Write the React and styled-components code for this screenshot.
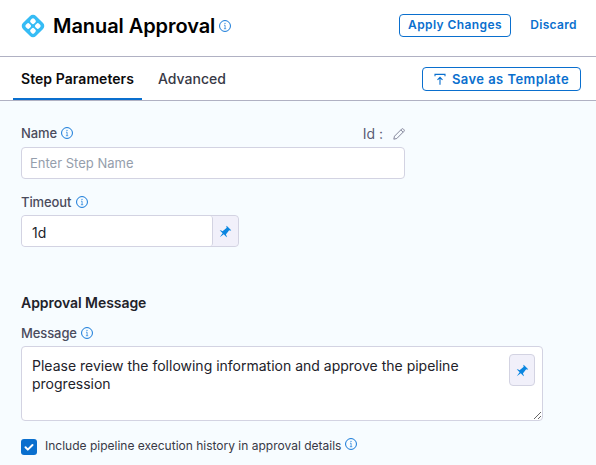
import React from 'react';
import styled, { createGlobalStyle } from 'styled-components';

const GlobalStyle = createGlobalStyle`
  *, *::before, *::after { box-sizing: border-box; }
  body { margin: 0; background: #f7fcff; font-family: Inter, sans-serif; color: #22222a; }
  button, input, textarea { font-family: inherit; }
`;

const Panel = styled.main`
  display: flex;
  flex-direction: column;
  width: 596px;
  height: 465px;
  overflow: hidden;
  background: #f7fcff;
`;

const Header = styled.header`
  display: flex;
  align-items: center;
  height: 57px;
  padding: 0 7px 4px 20px;
  background: #fff;
  border-bottom: 1px solid #b0b1c3;
`;

const Title = styled.h1`
  margin: 0 4px 0 7px;
  font-size: 20px;
  line-height: 28px;
  font-weight: 600;
  letter-spacing: -0.07px;
  color: #000;
  white-space: nowrap;
`;

const Actions = styled.div`
  display: flex;
  align-items: center;
  gap: 7px;
  margin: 0 0 2px auto;
`;

const Button = styled.button`
  display: flex;
  align-items: center;
  justify-content: center;
  width: ${(p) => p.$width}px;
  height: ${(p) => p.$height}px;
  padding: 0 0 1px;
  gap: 6px;
  border: 1px solid ${(p) => (p.$plain ? 'transparent' : '#0a6fce')};
  border-radius: 4px;
  background: transparent;
  color: #0a6fce;
  font-size: ${(p) => p.$size}px;
  font-weight: 600;
  letter-spacing: ${(p) => p.$tracking}px;
  white-space: nowrap;
`;

const TabBar = styled.nav`
  display: flex;
  height: 44px;
  padding: 0 15px 0 13px;
  background: #fff;
  border-bottom: 1px solid #b0b1c3;
`;

const Tab = styled.button`
  height: 43px;
  padding: 2px 8px 0;
  border: 0;
  border-bottom: 2px solid ${(p) => (p.$active ? '#0a6fce' : 'transparent')};
  background: none;
  font-size: 14px;
  font-weight: ${(p) => (p.$active ? 600 : 500)};
  letter-spacing: ${(p) => (p.$active ? 0.06 : 0)}px;
  color: ${(p) => (p.$active ? '#0b0b0d' : '#383946')};
  margin-right: 8px;
  white-space: nowrap;
`;

const TabActions = styled.div`
  margin: 10px 0 0 auto;
`;

const Form = styled.form`
  display: flex;
  flex-direction: column;
  padding: 23px 21px 0;
`;

const LabelRow = styled.div`
  display: flex;
  align-items: center;
  justify-content: space-between;
  width: 384px;
  height: 18px;
`;

const Label = styled.label`
  display: flex;
  align-items: center;
  gap: ${(p) => p.$gap || 4}px;
  font-size: 13px;
  line-height: 18px;
  font-weight: 500;
  letter-spacing: -0.1px;
  color: #4a4b5c;
`;

const Identifier = styled.div`
  display: flex;
  align-items: center;
  gap: 10px;
  padding-top: 1px;
  font-size: 14px;
  line-height: 18px;
  color: #5c5e77;
`;

const NameInput = styled.input`
  width: 384px;
  height: 32px;
  margin: 5px 0 14px;
  padding: 0 8px;
  border: 1px solid #d3d3e2;
  border-radius: 4px;
  background: #fff;
  font-size: 13px;
  outline: 0;
  &::placeholder { color: #959eac; opacity: 1; }
`;

const TimeoutGroup = styled.div`
  display: flex;
  width: 218px;
  height: 32px;
  margin: 4px 0 47px;
  border: 1px solid #d3d3e2;
  border-radius: 4px;
  background: #f1f0fa;
  overflow: hidden;
`;

const TimeoutInput = styled.input`
  width: 191px;
  padding: 2px 10px 0;
  border: 0;
  border-right: 1px solid #d3d3e2;
  border-radius: 3px;
  background: #fff;
  font-size: 14px;
  color: #22222a;
  outline: 0;
`;

const PinButton = styled.button`
  display: flex;
  align-items: center;
  justify-content: center;
  width: 26px;
  height: ${(p) => (p.$framed ? 32 : 30)}px;
  padding: 0;
  border: ${(p) => (p.$framed ? '1px solid #d3d3e2' : '0')};
  border-radius: 4px;
  background: #f1f0fa;
  color: #0a86e0;
`;

const SectionTitle = styled.h2`
  margin: 0 0 12px;
  font-size: 14px;
  line-height: 18px;
  font-weight: 600;
  letter-spacing: -0.05px;
  color: #22222a;
`;

const MessageBox = styled.div`
  position: relative;
  width: 522px;
  height: 75px;
  margin: 4px 0 16px;
`;

const MessageInput = styled.textarea`
  display: block;
  width: 522px;
  height: 75px;
  padding: 10px 60px 8px 10px;
  border: 1px solid #d3d3e2;
  border-radius: 4px;
  background: #fff;
  font-size: 14px;
  line-height: 18px;
  color: #22222a;
  resize: vertical;
  overflow: hidden;
  outline: 0;
`;

const PinOverlay = styled.div`
  position: absolute;
  top: 8px;
  right: 8px;
`;

const CheckRow = styled.label`
  display: flex;
  align-items: center;
  font-size: 12px;
  line-height: 18px;
  color: #383946;
  white-space: nowrap;
`;

const CheckMark = styled.span`
  display: flex;
  width: 16px;
  height: 16px;
  margin: 2px 8px 0 0;
  border-radius: 3px;
  background: #0a6fce;
`;

const RaisedInfo = styled.span`
  display: flex;
  margin: -4px 0 0 4px;
`;

const InfoIcon = () => (
  <svg width="12" height="12" viewBox="0 0 12 12" fill="none" stroke="#1478d8">
    <circle cx="6" cy="6" r="5.45" strokeWidth="1" />
    <path d="M5 5.2h1.1v3.3M4.9 8.7h2.3" strokeWidth=".7" />
    <circle cx="6" cy="3.3" r=".6" fill="#1478d8" stroke="none" />
  </svg>
);

const ApprovalIcon = () => (
  <svg width="26" height="26" viewBox="0 0 26 26">
    <rect x="3.8" y="3.8" width="18.4" height="18.4" rx="4.2" fill="#36bcf5" transform="rotate(45 13 13)" />
    <g fill="#fff">
      <rect x="10.5" y="5.7" width="5" height="5" rx="1.7" transform="rotate(45 13 8.2)" />
      <rect x="5.7" y="10.5" width="5" height="5" rx="1.7" transform="rotate(45 8.2 13)" />
      <rect x="15.3" y="10.5" width="5" height="5" rx="1.7" transform="rotate(45 17.8 13)" />
      <rect x="10.5" y="15.3" width="5" height="5" rx="1.7" transform="rotate(45 13 17.8)" />
    </g>
  </svg>
);

const PinIcon = () => (
  <svg width="13" height="13" viewBox="0 0 16 16" fill="currentColor">
    <path d="M9.41.92c-.51.51-.41 1.5.15 2.56L4.34 7.54C2.8 6.48 1.45 6.05.92 6.58l3.54 3.54-3.54 4.95 4.95-3.54 3.54 3.54c.53-.53.1-1.88-.96-3.42l4.06-5.22c1.06.56 2.04.66 2.55.15L9.41.92z" />
  </svg>
);

const UploadIcon = () => (
  <svg width="12" height="12" viewBox="0 0 12 12" fill="none" stroke="currentColor" strokeWidth="1.1">
    <path d="M1 3.2V1.4h10v1.8M6 11.7V4.6M3.5 6.9L6 4.4l2.5 2.5" />
  </svg>
);

const PencilIcon = () => (
  <svg width="12" height="12" viewBox="0 0 12 12" fill="none" stroke="#777990" strokeWidth=".9" strokeLinejoin="round">
    <path d="M.8 11.2l.7-3L8.6 1.1a1.3 1.3 0 0 1 1.8 0l.5.5a1.3 1.3 0 0 1 0 1.8l-7.1 7.1zM7.8 1.9l2.3 2.3" />
  </svg>
);

const CheckIcon = () => (
  <svg width="16" height="16" viewBox="0 0 16 16" fill="none" stroke="#fff" strokeWidth="2" strokeLinecap="round" strokeLinejoin="round">
    <path d="M4.5 8.3l2.3 2.3L11.5 6" />
  </svg>
);

export default function App() {
  return (
    <Panel>
      <GlobalStyle />
      <Header>
        <ApprovalIcon />
        <Title>Manual Approval</Title>
        <InfoIcon />
        <Actions>
          <Button $width={112} $height={23} $size={12} $tracking={0.4}>Apply Changes</Button>
          <Button $plain $width={71} $height={23} $size={12} $tracking={0.3}>Discard</Button>
        </Actions>
      </Header>
      <TabBar>
        <Tab $active>Step Parameters</Tab>
        <Tab>Advanced</Tab>
        <TabActions>
          <Button $width={159} $height={24} $size={13} $tracking={0.45}>
            <UploadIcon />
            Save as Template
          </Button>
        </TabActions>
      </TabBar>
      <Form>
        <LabelRow>
          <Label htmlFor="name">Name <InfoIcon /></Label>
          <Identifier>Id : <PencilIcon /></Identifier>
        </LabelRow>
        <NameInput id="name" placeholder="Enter Step Name" />
        <Label htmlFor="timeout" $gap={5}>Timeout <InfoIcon /></Label>
        <TimeoutGroup>
          <TimeoutInput id="timeout" defaultValue="1d" />
          <PinButton type="button" aria-label="Timeout value type"><PinIcon /></PinButton>
        </TimeoutGroup>
        <SectionTitle>Approval Message</SectionTitle>
        <Label htmlFor="message">Message <InfoIcon /></Label>
        <MessageBox>
          <MessageInput
            id="message"
            spellCheck={false}
            defaultValue="Please review the following information and approve the pipeline progression"
          />
          <PinOverlay>
            <PinButton $framed type="button" aria-label="Message value type"><PinIcon /></PinButton>
          </PinOverlay>
        </MessageBox>
        <CheckRow>
          <CheckMark><CheckIcon /></CheckMark>
          Include pipeline execution history in approval details
          <RaisedInfo><InfoIcon /></RaisedInfo>
        </CheckRow>
      </Form>
    </Panel>
  );
}
